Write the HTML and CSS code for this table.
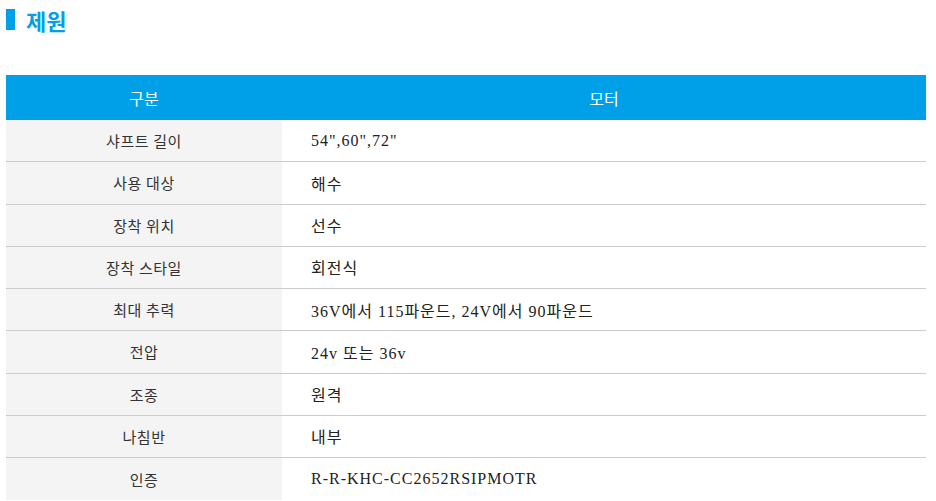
FILE: index.html
```html
<!DOCTYPE html>
<html lang="ko">
<head>
<meta charset="utf-8">
<link rel="stylesheet" href="styles.css">
</head>
<body>
<div class="page">
  <h2 class="title"><span class="title-bar"></span>제원</h2>
  <table class="spec">
    <thead>
      <tr><th class="c1">구분</th><th class="c2">모터</th></tr>
    </thead>
    <tbody>
      <tr><td class="c1">샤프트 길이</td><td class="c2">54",60",72"</td></tr>
      <tr><td class="c1">사용 대상</td><td class="c2">해수</td></tr>
      <tr><td class="c1">장착 위치</td><td class="c2">선수</td></tr>
      <tr><td class="c1">장착 스타일</td><td class="c2">회전식</td></tr>
      <tr><td class="c1">최대 추력</td><td class="c2">36V에서 115파운드, 24V에서 90파운드</td></tr>
      <tr><td class="c1">전압</td><td class="c2">24v 또는 36v</td></tr>
      <tr><td class="c1">조종</td><td class="c2">원격</td></tr>
      <tr><td class="c1">나침반</td><td class="c2">내부</td></tr>
      <tr><td class="c1">인증</td><td class="c2">R-R-KHC-CC2652RSIPMOTR</td></tr>
    </tbody>
  </table>
</div>
</body>
</html>
```
FILE: styles.css
```css
html, body { margin: 0; padding: 0; background: #fff; }
.page { padding: 0 10px 0 6px; }
.title {
  margin: 0;
  padding-top: 5px;
  height: 75px;
  box-sizing: border-box;
  display: flex;
  align-items: flex-start;
  font-family: "Noto Sans CJK KR", "Noto Sans", sans-serif;
  font-size: 22px;
  font-weight: 700;
  line-height: 30px;
  color: #00a0e9;
}
.title-bar {
  display: inline-block;
  width: 9px;
  height: 21px;
  margin-top: 4px;
  margin-right: 11px;
  background: #00a0e9;
}
.spec {
  width: 920px;
  border-collapse: collapse;
  table-layout: fixed;
  font-family: "Liberation Serif", "Noto Sans CJK KR", serif;
  font-size: 16px;
  letter-spacing: 1px;
  color: #222;
}
.spec .c1 { width: 276px; }
.spec th {
  height: 45px;
  padding: 0;
  background: #00a0e9;
  color: #fff;
  font-weight: 400;
  font-size: 16px;
  letter-spacing: 0;
  font-family: "Noto Sans CJK KR", "Liberation Serif", sans-serif;
  text-align: center;
}
.spec td {
  height: 41.25px;
  padding: 0;
  border-bottom: 1px solid #cccccc;
  vertical-align: middle;
}
.spec tbody tr:last-child td { border-bottom: none; height: 42px; }
.spec td.c1 { background: #f4f4f4; text-align: center; font-size: 15px; letter-spacing: 0.5px; color: #333; }
.spec td.c2 { padding-left: 29px; text-align: left; }
```
